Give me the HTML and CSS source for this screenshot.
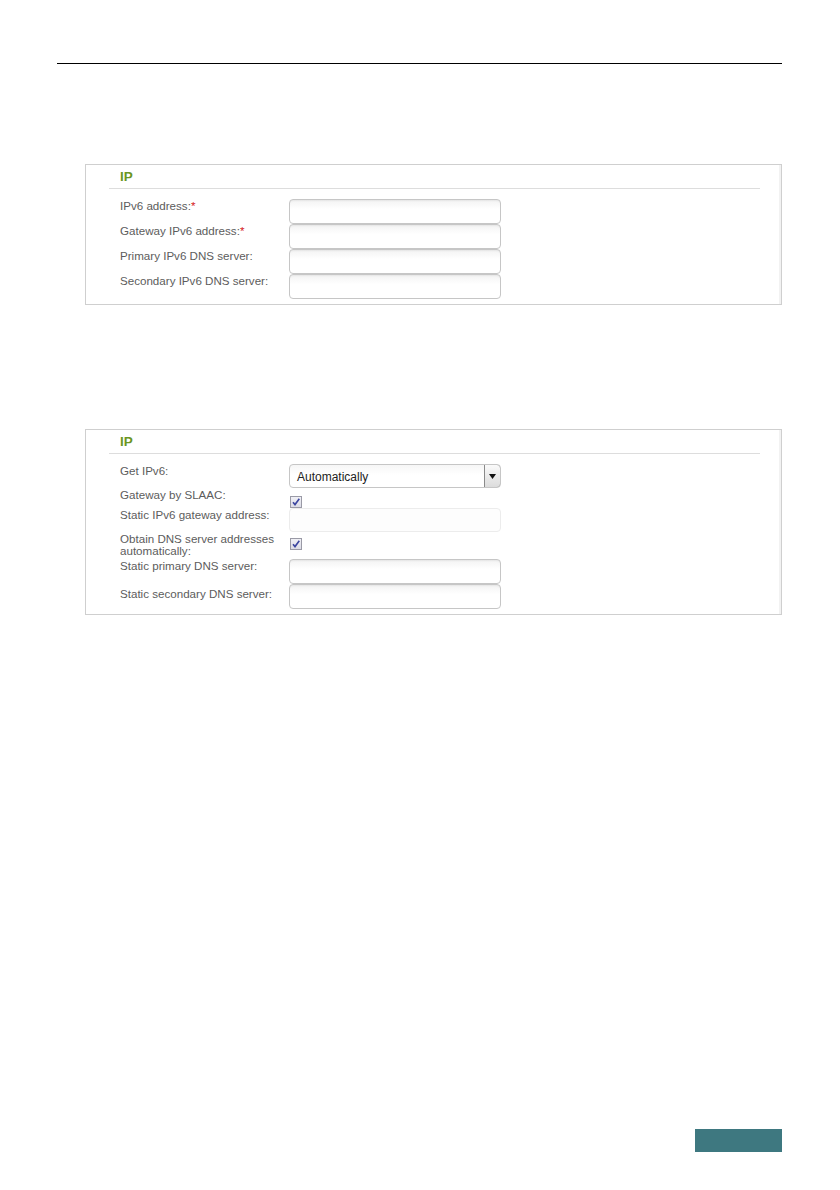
FILE: index.html
```html
<!DOCTYPE html>
<html>
<head>
<meta charset="utf-8">
<link rel="stylesheet" href="styles.css">
</head>
<body>
<div class="page">
  <div class="rule"></div>

  <section class="panel panel-one">
    <div class="panel-head">IP</div>
    <div class="rows">
      <div class="row">
        <div class="label">IPv6 address:<span class="req">*</span></div>
        <div class="field input"></div>
      </div>
      <div class="row">
        <div class="label">Gateway IPv6 address:<span class="req">*</span></div>
        <div class="field input"></div>
      </div>
      <div class="row">
        <div class="label">Primary IPv6 DNS server:</div>
        <div class="field input"></div>
      </div>
      <div class="row">
        <div class="label">Secondary IPv6 DNS server:</div>
        <div class="field input"></div>
      </div>
    </div>
  </section>

  <section class="panel panel-two">
    <div class="panel-head">IP</div>
    <div class="rows">
      <div class="row">
        <div class="label">Get IPv6:</div>
        <div class="field select">
          <span class="select-text">Automatically</span>
          <span class="select-btn">
            <svg width="7" height="5" viewBox="0 0 7 5"><path d="M0 0H7L3.5 5Z" fill="#111"/></svg>
          </span>
        </div>
      </div>
      <div class="row row-check">
        <div class="label">Gateway by SLAAC:</div>
        <div class="check check-low">
          <svg width="10" height="10" viewBox="0 0 10 10"><path d="M2 5.2L4 7.6L8.3 1.8" fill="none" stroke="#3c46a0" stroke-width="1.6"/></svg>
        </div>
      </div>
      <div class="row">
        <div class="label">Static IPv6 gateway address:</div>
        <div class="field input disabled"></div>
      </div>
      <div class="row row-obtain">
        <div class="label label-two">Obtain DNS server addresses automatically:</div>
        <div class="check check-mid">
          <svg width="10" height="10" viewBox="0 0 10 10"><path d="M2 5.2L4 7.6L8.3 1.8" fill="none" stroke="#3c46a0" stroke-width="1.6"/></svg>
        </div>
      </div>
      <div class="row">
        <div class="label">Static primary DNS server:</div>
        <div class="field input"></div>
      </div>
      <div class="row">
        <div class="label label-low">Static secondary DNS server:</div>
        <div class="field input"></div>
      </div>
    </div>
  </section>

  <div class="page-box"></div>
</div>
</body>
</html>
```

FILE: styles.css
```css
* { box-sizing: border-box; }

html, body {
  margin: 0;
  padding: 0;
  background: #ffffff;
}

body {
  font-family: "Liberation Sans", Arial, sans-serif;
  font-size: 11.6px;
  color: #5c5c5c;
}

.page {
  width: 840px;
  height: 1190px;
  padding-top: 63px;
}

.rule {
  margin-left: 57px;
  width: 725px;
  height: 1px;
  background: #000000;
}

.panel {
  margin-left: 85px;
  width: 697px;
  border: 1px solid #cfcfcf;
  padding: 0 21px 5px 23px;
  box-shadow: inset -2px 0 0 #f2f2f2;
}

.panel-one { margin-top: 100px; }
.panel-two { margin-top: 124px; }

.panel-head {
  padding: 4px 0 3px 11px;
  line-height: 16px;
  font-size: 13.5px;
  font-weight: bold;
  color: #6b9622;
  border-bottom: 1px solid #dddddd;
}

.rows {
  padding: 10px 0 0 11px;
}

.row {
  display: flex;
  align-items: flex-start;
}

.label {
  width: 169px;
  line-height: 14px;
  color: #5c5c5c;
  white-space: nowrap;
}

.label-two {
  white-space: normal;
  width: 169px;
  line-height: 12px;
  padding-top: 1px;
  padding-right: 4px;
}

.label-low { padding-top: 3px; }

.req { color: #d42020; }

.field {
  width: 212px;
  height: 25px;
  border: 1px solid #c6c6c6;
  border-radius: 4px;
  background: linear-gradient(#f3f3f3, #ffffff 40%);
  box-shadow: inset 0 2px 2px -1px rgba(0, 0, 0, 0.06);
}

.field.disabled {
  height: 24px;
  border-color: #ececec;
  background: #fdfdfd;
  box-shadow: none;
}

.select {
  height: 24px;
  display: flex;
  align-items: stretch;
  overflow: hidden;
  background: linear-gradient(#f6f6f6, #ffffff 45%);
  box-shadow: none;
}

.select-text {
  flex: 1;
  padding-left: 7px;
  line-height: 24px;
  font-size: 12px;
  color: #222222;
}

.select-btn {
  width: 17px;
  margin: -1px -1px -1px 0;
  border: 1px solid #8a8a8a;
  border-radius: 0 4px 4px 0;
  background: linear-gradient(#fafafa, #dcdcdc);
  display: flex;
  align-items: center;
  justify-content: center;
}

.row-check { height: 20px; }
.row-obtain { height: 27px; }

.check {
  width: 12px;
  height: 12px;
  margin-left: 1px;
  border: 1px solid #9a9aa6;
  background: linear-gradient(#f0f0f6, #dcdce6);
  display: flex;
  align-items: center;
  justify-content: center;
}

.check-low { margin-top: 8px; }
.check-mid { margin-top: 6px; }

.page-box {
  margin-top: 514px;
  margin-left: 695px;
  width: 87px;
  height: 23px;
  background: #3e7880;
}
```
